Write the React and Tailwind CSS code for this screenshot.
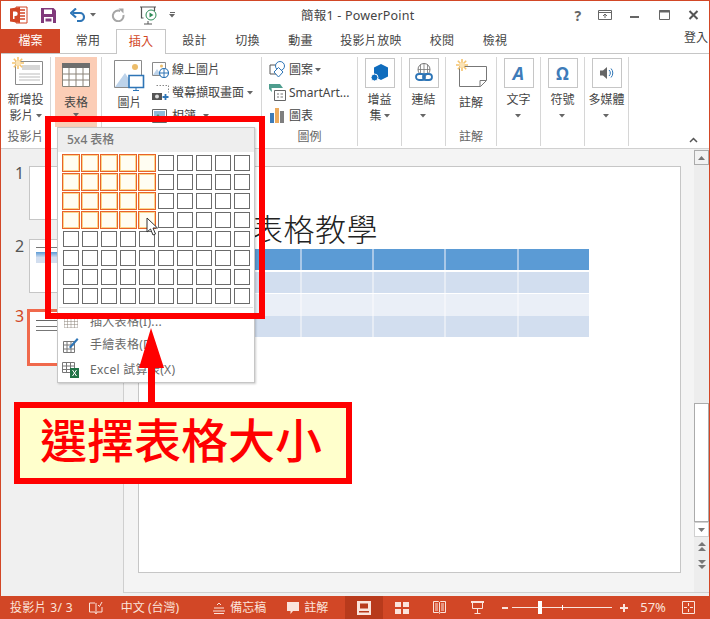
import React from 'react';

const TABS = [
  ['常用', 'ml-[17px] w-[22px]'],
  ['插入', 'ml-[17px] w-[50px]'],
  ['設計', 'ml-[17px] w-[23px]'],
  ['切換', 'ml-[30px] w-[23px]'],
  ['動畫', 'ml-[30px] w-[23px]'],
  ['投影片放映', 'ml-[29px] w-[60px]'],
  ['校閱', 'ml-[29px] w-[24px]'],
  ['檢視', 'ml-[29px] w-[24px]'],
];

const TABLE_ROWS = [
  { h: 'mt-0 [&>div]:h-[21px]', bg: 'bg-[#A9C8E8]', cell: 'bg-[#5B9BD5]' },
  { h: 'mt-[2px] [&>div]:h-[21px]', bg: 'bg-[#E6ECF5]', cell: 'bg-[#D2DEEF]' },
  { h: 'mt-px [&>div]:h-[22px]', bg: 'bg-[#F3F5FA]', cell: 'bg-[#EAEFF7]' },
  { h: 'mt-0 [&>div]:h-[21px]', bg: 'bg-[#E6ECF5]', cell: 'bg-[#D2DEEF]' },
];

const Caret = ({ className = '' }) => (
  <svg width="6" height="4" viewBox="0 0 6 4" className={className}>
    <path d="M0 0h6L3 3.5z" fill="#666" />
  </svg>
);

const Sun = ({ x = 0, y = 0 }) => (
  <g transform={`translate(${x} ${y})`} stroke="#F5C46E" strokeWidth="1.6">
    <path d="M6 0v12M0 6h12M1.8 1.8l8.4 8.4M10.2 1.8l-8.4 8.4" />
    <circle cx="6" cy="6" r="2.6" fill="#FBE3B5" stroke="none" />
  </g>
);

const PptLogo = () => (
  <svg width="18" height="18" viewBox="0 0 18 18">
    <path d="M6 1h11v16H6z" fill="#fff" stroke="#D24726" />
    <path d="M10 4h5M10 7h5M10 10h5M10 13h5" stroke="#D24726" strokeWidth="1.5" />
    <path d="M0 2.5 10 1v16L0 15.5z" fill="#D24726" />
    <path d="M3 13V5.5h2.4a2.2 2.2 0 0 1 0 4.6H4.5V13z" fill="#fff" />
  </svg>
);

const SaveIcon = () => (
  <svg width="15" height="15" viewBox="0 0 15 15">
    <path d="M0 0h12.5L15 2.5V15H0z" fill="#80397B" />
    <path d="M3 1.5h8v4.5H3z" fill="#fff" />
    <path d="M3 9h9v6H3z" fill="#fff" />
    <path d="M4.5 10.5h6v3h-6z" fill="#80397B" />
  </svg>
);

const UndoIcon = () => (
  <svg width="16" height="14" viewBox="0 0 16 14" fill="none">
    <path d="M3 5h7a4 4 0 0 1 0 8H7" stroke="#2E75B6" strokeWidth="2.2" />
    <path d="M6 0.5 1 5l5 4.5" stroke="#2E75B6" strokeWidth="2.2" />
  </svg>
);

const RedoIcon = () => (
  <svg width="14" height="14" viewBox="0 0 14 14" fill="none">
    <path d="M9.2 3A5.3 5.3 0 1 0 12.4 7" stroke="#A6A6A6" strokeWidth="2" />
    <path d="M7.5 0.5h5v5" fill="#A6A6A6" />
  </svg>
);

const ShowIcon = () => (
  <svg width="18" height="19" viewBox="0 0 18 19" fill="none">
    <path d="M0 1h16M1.5 1v11h2M14.5 1v4" stroke="#555" strokeWidth="1.2" />
    <circle cx="11" cy="9" r="5" fill="#fff" stroke="#2E8B57" />
    <path d="M9.5 6.5v5l4-2.5z" fill="#2E8B57" />
    <path d="M8 15v3M4 18h8" stroke="#555" />
  </svg>
);

const SlideIcon = () => (
  <svg width="31" height="30" viewBox="0 0 31 30" fill="none">
    <path d="M3.5 4.5h27v23h-27z" stroke="#8a8a8a" fill="#fff" />
    <path d="M10 8h18v5H10z" fill="#d6d6d6" />
    <path d="M7 17h21M7 20h21M7 23h21" stroke="#bbb" />
    <Sun x="0" y="0" />
  </svg>
);

const TableIcon = ({ w = 28, h = 24 }) => (
  <svg width={w} height={h} viewBox="0 0 28 24" fill="none">
    <path d="M0 0h28v24H0z" fill="#fff" />
    <path d="M0 0h28v5H0z" fill="#6e6e6e" />
    <path d="M.5 5v18.500h27V5M0 11h28M0 17h28M7 5v19M14 5v19M21 5v19" stroke="#8b8378" />
  </svg>
);

const PictureIcon = () => (
  <svg width="31" height="31" viewBox="0 0 31 31" fill="none">
    <path d="M.5.5h27v27H.5z" stroke="#8a8a8a" fill="#fff" />
    <circle cx="21" cy="7" r="3" fill="#EDBD6A" />
    <path d="M1 27 11 13l9 14z" fill="#BDD3EA" />
    <path d="M15 15.500h14.500v12H15z" fill="#fff" stroke="#2E75B6" strokeWidth="1.6" />
    <path d="M22 28v2M19 30.500h6" stroke="#2E75B6" />
  </svg>
);

const OnlinePicIcon = () => (
  <svg width="17" height="16" viewBox="0 0 17 16" fill="none">
    <path d="M.5.5h13v13H.5z" stroke="#8a8a8a" fill="#fff" />
    <circle cx="9.500" cy="4" r="1.500" fill="#EDBD6A" />
    <path d="M1 13l4-6 4 6z" fill="#BDD3EA" />
    <circle cx="12" cy="11" r="4.500" fill="#fff" stroke="#2E75B6" strokeWidth="1.200" />
    <path d="M7.500 11h9M12 6.500v9" stroke="#2E75B6" />
  </svg>
);

const ScreenshotIcon = () => (
  <svg width="17" height="17" viewBox="0 0 17 17" fill="none">
    <path d="M4.500 1.500h12v7" stroke="#888" strokeDasharray="1.500 1.500" />
    <path d="M0 9h10v7H0z" fill="#555" />
    <circle cx="5" cy="12.500" r="2" fill="#ddd" />
    <path d="M13.500 10v6M10.500 13h6" stroke="#2E75B6" strokeWidth="1.800" />
  </svg>
);

const AlbumIcon = () => (
  <svg width="17" height="14" viewBox="0 0 17 14" fill="none">
    <path d="M.5.5h14v13H.5z" stroke="#666" fill="#fff" />
    <path d="M2 2h11v8H2z" fill="#8FBBD9" />
    <path d="M2 10l4-5 4 5z" fill="#4E8F6E" />
  </svg>
);

const ShapesIcon = () => (
  <svg width="17" height="17" viewBox="0 0 17 17" fill="none">
    <path d="M1 4h8v9H1z" stroke="#555" />
    <circle cx="11" cy="5" r="4.500" stroke="#2E75B6" fill="#fff" />
    <path d="M9.500 6.500 14 11l-4.500 5L5 11z" stroke="#2E75B6" fill="#fff" />
  </svg>
);

const SmartArtIcon = () => (
  <svg width="17" height="17" viewBox="0 0 17 17" fill="none">
    <path d="M0 0h11l3 4H2.500L3 8 0 5z" fill="#4E9D8E" />
    <path d="M5.500 6.500h11v10h-11z" stroke="#666" fill="#fff" />
    <path d="M8 10h2M8 13h2M11.500 10H14M11.500 13H14" stroke="#777" />
  </svg>
);

const ChartIcon = () => (
  <svg width="15" height="15" viewBox="0 0 15 15">
    <path d="M0 5h4v10H0z" fill="#3E7CB9" />
    <path d="M5 0h4v15H5z" fill="#EDAA5C" />
    <path d="M10 3h4v12h-4z" fill="#7F7F7F" />
  </svg>
);

const StoreIcon = () => (
  <svg width="20" height="20" viewBox="0 0 20 20">
    <path d="M11 1l7 3.500v9L11 17l-7-3.500v-9z" fill="#0F6CBD" />
    <circle cx="4.500" cy="14.500" r="3.500" fill="#0F6CBD" stroke="#fff" />
  </svg>
);

const LinkIcon = () => (
  <svg width="18" height="20" viewBox="0 0 18 20" fill="none">
    <circle cx="9" cy="6.500" r="6" stroke="#777" />
    <path d="M3 6.500h12M9 .5v12M5.500 1.500v10M12.500 1.500v10" stroke="#777" strokeWidth=".8" />
    <rect x="1" y="11" width="9" height="6" rx="3" stroke="#2E75B6" strokeWidth="1.800" fill="#fff" />
    <rect x="8" y="11" width="9" height="6" rx="3" stroke="#2E75B6" strokeWidth="1.800" />
  </svg>
);

const NoteIcon = () => (
  <svg width="31" height="28" viewBox="0 0 31 28" fill="none">
    <path d="M3.500 7.500h27v14l-6 6h-21z" stroke="#777" fill="#fff" />
    <path d="M30 21.500h-6v6" stroke="#777" />
    <Sun x="0" y="0" />
  </svg>
);

const SpeakerIcon = () => (
  <svg width="14" height="14" viewBox="0 0 14 14" fill="none">
    <path d="M0 4.500h3L7 1v12L3 9.500H0z" fill="#666" />
    <path d="M9 4a4 4 0 0 1 0 6M11 2.500a6.500 6.500 0 0 1 0 9" stroke="#2E75B6" />
  </svg>
);

const Group = ({ width, label, children }) => (
  <div className={`${width} relative flex h-[89px] shrink-0 flex-col border-r border-[#d6d6d6]`}>
    <div className="flex-1 min-h-0">{children}</div>
    {label && <div className="text-center text-[12px] leading-[18px] text-[#666]">{label}</div>}
  </div>
);

const BoxedButton = ({ lines, children }) => (
  <div className="flex flex-col items-center">
    <div className="flex h-[30px] w-[30px] items-center justify-center border border-[#c6c6c6]">{children}</div>
    <div className="mt-[4px] text-center text-[12px] leading-[16px] text-[#444]">
      {lines.map((l) => <div key={l}>{l}</div>)}
      <Caret className="mx-auto mt-[6px]" />
    </div>
  </div>
);

const SmallRow = ({ icon, text, caret }) => (
  <div className="flex h-[23px] items-center whitespace-nowrap text-[12px] text-[#444]">
    <span className="flex w-[18px] justify-center">{icon}</span>
    <span className="ml-[3px]">{text}</span>
    {caret}
  </div>
);

const MenuRow = ({ icon, text, className = '' }) => (
  <div className={`flex h-[23px] items-center ${className}`}>
    <span className="ml-[4px] flex w-[17px] justify-center">{icon}</span>
    <span className="ml-[11px] text-[12px] tracking-[0.3px] text-[#6a6a6a]">{text}</span>
  </div>
);

const StatusText = ({ className = '', children }) => (
  <span className={`whitespace-nowrap text-[12px] text-[#fbe4dc] ${className}`}>{children}</span>
);

const TableGrid = () => (
  <div className="ml-[3px] mt-[1px] grid grid-cols-[repeat(10,19px)] auto-rows-[19px]">
    {Array.from({ length: 80 }).map((_, i) => {
      const sel = i % 10 < 5 && i < 40;
      return (
        <div key={i} className="flex items-center justify-center">
          {sel
            ? <div className="h-[18px] w-[18px] border border-[#E8632A] bg-[#FFFDF2] shadow-[inset_0_0_0_1px_#FBD58C]" />
            : <div className="h-4 w-4 border border-[#6b6b6b] bg-white" />}
        </div>
      );
    })}
  </div>
);

const Thumb = ({ num, active, children, className = '' }) => (
  <div className={`flex ${className}`}>
    <span className={`w-[14px] text-[16px] leading-[14px] ${active ? 'text-[#D24726]' : 'text-[#555]'}`}>{num}</span>
    <div className={active
      ? 'ml-[-2px] h-[57px] w-[86px] border-[3px] border-[#F0694C] bg-white pl-[6px] pt-[8px]'
      : 'h-[54px] w-[84px] border border-[#c6c6c6] bg-white pl-[6px] pt-[7px]'}>
      {children}
    </div>
  </div>
);

export default function App() {
  return (
    <div className="relative flex h-[619px] w-[710px] flex-col overflow-hidden border-x border-t border-[#D24726] bg-white [font-family:'Noto_Sans','Noto_Sans_CJK_TC',sans-serif]">
      {/* title bar */}
      <div className="relative flex h-[28px] shrink-0 items-center">
        <span className="ml-[9px]"><PptLogo /></span>
        <span className="ml-[13px]"><SaveIcon /></span>
        <span className="ml-[14px]"><UndoIcon /></span>
        <Caret className="ml-[4px]" />
        <span className="ml-[15px]"><RedoIcon /></span>
        <span className="ml-[15px]"><ShowIcon /></span>
        <span className="ml-[11px] flex flex-col items-center gap-[1px]">
          <span className="h-px w-[5px] bg-[#666]" />
          <Caret />
        </span>
        <span className="ml-[126px] mt-[2px] whitespace-nowrap text-[12.5px] tracking-[0.2px] text-[#444]">簡報1 - PowerPoint</span>
        <span className="ml-[160px] text-[14px] font-bold text-[#666]">?</span>
        <svg className="ml-[17px]" width="14" height="10" viewBox="0 0 14 10" fill="none">
          <path d="M.5.5h13v9H.5zM0 2.500h14" stroke="#666" />
          <path d="M7 8V4M5 6l2-2 2 2" stroke="#666" />
        </svg>
        <span className="ml-[18px] mt-[4px] h-[2px] w-[9px] bg-[#666]" />
        <svg className="ml-[20px]" width="11" height="10" viewBox="0 0 11 10" fill="none">
          <path d="M.5.5h10v9H.5z" stroke="#666" />
          <path d="M0 1.500h11" stroke="#666" strokeWidth="2" />
        </svg>
        <svg className="ml-[18px]" width="11" height="10" viewBox="0 0 10 10" fill="none">
          <path d="M1 1l8 8M9 1l-8 8" stroke="#555" strokeWidth="2" />
        </svg>
      </div>

      {/* tabs */}
      <div className="relative flex h-[25px] shrink-0 border-b border-[#c6c6c6]">
        <div className="flex h-[24px] w-[59px] items-center justify-center bg-[#D24726] text-[12px] text-white">檔案</div>
        {TABS.map(([t, cls]) => (
          <div
            key={t}
            className={t === '插入'
              ? `${cls} z-10 flex h-[25px] items-center justify-center border-x border-t border-[#c6c6c6] bg-white text-[12px] tracking-[0.3px] text-[#D24726]`
              : `${cls} flex h-[24px] items-center justify-center whitespace-nowrap text-[12px] tracking-[0.3px] text-[#444]`}
          >
            {t}
          </div>
        ))}
        <div className="ml-auto mr-[1px] mt-[1px] text-[12px] leading-[16px] text-[#444]">登入</div>
      </div>

      {/* ribbon */}
      <div className="relative flex h-[95px] shrink-0 border-b border-[#d0d0d0] pt-[3px]">
        <Group width="w-[50px]" label="投影片">
          <div className="flex flex-col items-center">
            <span className="ml-[4px]"><SlideIcon /></span>
            <div className="mt-[5px] text-center text-[12px] leading-[16px] text-[#444]">
              <div className="whitespace-nowrap">新增投</div>
              <div className="flex h-[16px] items-center justify-center gap-[2px]">影片<Caret /></div>
            </div>
          </div>
        </Group>
        <Group width="w-[51px]">
          <div className="mx-[4px] flex h-[70px] flex-col items-center bg-[#FBCDB6] pt-[6px]">
            <TableIcon />
            <div className="mt-[8px] text-[12px] leading-[16px] text-[#444]">表格</div>
            <Caret className="mt-[2px]" />
          </div>
        </Group>
        <Group width="w-[160px]">
          <div className="flex pl-[10px] pt-[3px]">
            <div className="flex w-[35px] flex-col items-center">
              <PictureIcon />
              <div className="mt-[4px] text-[12px] leading-[16px] text-[#444]">圖片</div>
            </div>
            <div className="ml-[4px] mt-[-2px]">
              <SmallRow icon={<OnlinePicIcon />} text="線上圖片" />
              <SmallRow icon={<ScreenshotIcon />} text="螢幕擷取畫面" caret={<Caret className="ml-[3px]" />} />
              <SmallRow icon={<AlbumIcon />} text="相簿" caret={<Caret className="ml-[7px]" />} />
            </div>
          </div>
        </Group>
        <Group width="w-[96px]" label="圖例">
          <div className="pl-[6px] pt-[1px]">
            <SmallRow icon={<ShapesIcon />} text="圖案" caret={<Caret className="ml-[2px]" />} />
            <SmallRow icon={<SmartArtIcon />} text="SmartArt..." />
            <SmallRow icon={<ChartIcon />} text="圖表" />
          </div>
        </Group>
        <Group width="w-[44px]">
          <div className="pt-[1px]">
            <div className="flex flex-col items-center">
              <div className="flex h-[30px] w-[30px] items-center justify-center border border-[#c6c6c6]"><StoreIcon /></div>
              <div className="mt-[4px] text-center text-[12px] leading-[16px] text-[#444]">
                <div>增益</div>
                <div className="flex h-[16px] items-center justify-center gap-[2px]">集<Caret /></div>
              </div>
            </div>
          </div>
        </Group>
        <Group width="w-[44px]">
          <div className="pt-[1px]"><BoxedButton lines={['連結']}><LinkIcon /></BoxedButton></div>
        </Group>
        <Group width="w-[51px]" label="註解">
          <div className="flex flex-col items-center pt-[2px]">
            <NoteIcon />
            <div className="mt-[8px] text-[12px] leading-[16px] text-[#444]">註解</div>
          </div>
        </Group>
        <Group width="w-[44px]">
          <div className="pt-[1px]">
            <BoxedButton lines={['文字']}>
              <span className="text-[18px] font-bold italic leading-none text-[#3E7CB9]">A</span>
            </BoxedButton>
          </div>
        </Group>
        <Group width="w-[44px]">
          <div className="pt-[1px]">
            <BoxedButton lines={['符號']}>
              <span className="text-[17px] font-bold leading-none text-[#3E7CB9]">Ω</span>
            </BoxedButton>
          </div>
        </Group>
        <Group width="w-[44px]">
          <div className="pt-[1px]">
            <BoxedButton lines={['多媒體']}><SpeakerIcon /></BoxedButton>
          </div>
        </Group>
        <svg className="absolute bottom-[5px] right-[11px]" width="9" height="6" viewBox="0 0 9 6" fill="none">
          <path d="M1 5l3.500-3.500L8 5" stroke="#555" strokeWidth="1.500" />
        </svg>
      </div>

      {/* main area */}
      <div className="flex min-h-0 flex-1 border-b-[3px] border-[#f0f0f0] bg-[#f0f0f0]">
        <div className="w-[123px] shrink-0 border-r border-[#cfcfcf] pl-[14px] pt-[17px]">
          <Thumb num="1" />
          <Thumb num="2" className="mt-[19px]">
            <div className="h-px w-[30px] bg-[#777]" />
            <div className="mt-[4px] h-[11px] w-[60px] bg-gradient-to-b from-[#5B9BD5] via-[#D2DEEF] to-[#D2DEEF]" />
          </Thumb>
          <Thumb num="3" active className="mt-[16px]">
            <div className="h-px w-[30px] bg-[#666]" />
            <div className="mt-[5px] h-px w-[40px] bg-[#777]" />
            <div className="mt-[3px] h-px w-[40px] bg-[#777]" />
          </Thumb>
        </div>
        <div className="min-w-0 flex-1 border-b border-[#d0d0d0] bg-[#f4f4f4] pl-[14px] pr-[13px] pt-[17px]">
          <div className="h-[407px] border border-[#c6c6c6] bg-white pt-[42px]">
            <div className="pl-[113px] text-[31px] font-light leading-[40px] tracking-[0.5px] text-[#222]">表格教學</div>
            {TABLE_ROWS.map((r) => (
              <div key={r.cell + r.h} className={`ml-[18px] grid w-[432px] grid-cols-6 gap-x-[2px] ${r.bg} ${r.h}`}>
                {Array.from({ length: 6 }).map((_, i) => <div key={i} className={r.cell} />)}
              </div>
            ))}
          </div>
        </div>
        <div className="flex w-[15px] shrink-0 flex-col items-center border-b border-[#d0d0d0] bg-[#ededed] pt-[1px]">
          <div className="flex h-[15px] w-[15px] items-center justify-center border border-[#ababab] bg-[#f2f2f2]">
            <svg width="7" height="4" viewBox="0 0 7 4"><path d="M0 4h7L3.500 0z" fill="#777" /></svg>
          </div>
          <div className="h-[238px] shrink-0" />
          <div className="h-[119px] w-[15px] shrink-0 border border-[#ababab] bg-white" />
          <div className="flex h-[15px] w-[15px] shrink-0 items-center justify-center border border-[#d0d0d0] bg-white">
            <svg width="7" height="4" viewBox="0 0 7 4"><path d="M0 0h7L3.500 4z" fill="#777" /></svg>
          </div>
          <svg className="mt-[5px]" width="8" height="9" viewBox="0 0 8 9">
            <path d="M0 4h8L4 0zM0 9h8L4 5z" fill="#777" />
          </svg>
          <svg className="mt-[9px]" width="8" height="9" viewBox="0 0 8 9">
            <path d="M0 0h8L4 4zM0 5h8L4 9z" fill="#777" />
          </svg>
        </div>
      </div>

      {/* status bar */}
      <div className="flex h-[23px] shrink-0 items-center bg-[#D24726]">
        <StatusText className="ml-[9px] tracking-[0.3px]">投影片 3/ 3</StatusText>
        <svg className="ml-[16px]" width="14" height="14" viewBox="0 0 14 14" fill="none">
          <path d="M6 2H.5v9H6l1 2 1-2h5V6M7 2v9M9 4l1.500 1.500L13 1" stroke="#fbe4dc" />
        </svg>
        <StatusText className="ml-[18px]">中文 (台灣)</StatusText>
        <svg className="ml-[34px]" width="12" height="12" viewBox="0 0 12 12" fill="none">
          <path d="M4 3l2-2 2 2M1 6h10M0 9h12M1 11.500h10" stroke="#fbe4dc" />
        </svg>
        <StatusText className="ml-[5px]">備忘稿</StatusText>
        <svg className="ml-[21px]" width="12" height="12" viewBox="0 0 12 12">
          <path d="M0 0h12v9H6l-2.500 3V9H0z" fill="#fbe4dc" />
        </svg>
        <StatusText className="ml-[5px]">註解</StatusText>
        <div className="ml-[17px] flex h-[23px] w-[38px] items-center justify-center bg-[#B83A1C]">
          <svg width="14" height="14" viewBox="0 0 14 14">
            <path d="M0 0h14v14H0z" fill="#fbe4dc" />
            <path d="M3 2.500h8v5H3z" fill="#B83A1C" />
            <path d="M2 10h10v1.500H2z" fill="#B83A1C" />
          </svg>
        </div>
        <svg className="ml-[12px]" width="14" height="12" viewBox="0 0 14 12">
          <path d="M0 0h6v5H0zM8 0h6v5H8zM0 7h6v5H0zM8 7h6v5H8z" fill="#fbe4dc" />
        </svg>
        <svg className="ml-[24px]" width="13" height="13" viewBox="0 0 13 13" fill="none">
          <path d="M.5.5h5l1 1 1-1h5v11h-5l-1 1-1-1h-5zM6.500 1.500v10M2 3h3M2 5h3M2 7h3M2 9h3M8 3h3M8 5h3M8 7h3M8 9h3" stroke="#fbe4dc" />
        </svg>
        <svg className="ml-[25px]" width="13" height="13" viewBox="0 0 13 13" fill="none">
          <path d="M0 1h13" stroke="#fbe4dc" strokeWidth="2" />
          <path d="M1.500 1.500v6h10v-6M6.500 7.500v5M3.500 12.500h6" stroke="#fbe4dc" />
        </svg>
        <span className="ml-[18px] h-[2px] w-[6px] bg-[#fbe4dc]" />
        <div className="relative ml-[4px] h-px w-[100px] bg-[#fbe4dc]">
          <span className="absolute left-[26px] top-[-6px] h-[13px] w-1 bg-white" />
          <span className="absolute left-[50px] top-[-2px] h-[5px] w-px bg-white" />
        </div>
        <svg className="ml-[8px]" width="8" height="8" viewBox="0 0 8 8">
          <path d="M3 0h2v3h3v2H5v3H3V5H0V3h3z" fill="#fbe4dc" />
        </svg>
        <StatusText className="ml-[12px] text-[13px]">57%</StatusText>
        <svg className="ml-[16px]" width="13" height="13" viewBox="0 0 13 13" fill="none">
          <path d="M.5.5h12v12H.5z" stroke="#fbe4dc" />
          <path d="M6.500 2v3M6.500 8v3M2 6.500h3M8 6.500h3" stroke="#fbe4dc" />
        </svg>
      </div>

      {/* table dropdown */}
      <div className="absolute left-[56px] top-[126px] h-[256px] w-[198px] border border-[#c6c6c6] bg-white shadow-[1px_1px_2px_rgba(0,0,0,0.2)]">
        <div className="h-6 bg-[#eeeeee] pl-[9px] text-[12px] font-medium leading-[24px] text-[#777]">5x4 表格</div>
        <TableGrid />
        <div className="mx-px mt-[2px] h-px bg-[#e2e2e2]" />
        <div className="mt-[2px]">
          <MenuRow icon={<TableIcon w={14} h={12} />} text="插入表格(I)..." />
          <MenuRow
            icon={(
              <svg width="16" height="16" viewBox="0 0 16 16" fill="none">
                <path d="M.5 4.500h11v11H.5zM.5 8h11M.5 12h11M4 4.500v11M8 4.500v11" stroke="#777" />
                <path d="M6 10l8-9 1.500 1.500-8 9z" fill="#2E75B6" />
              </svg>
            )}
            text="手繪表格(D)"
          />
          <MenuRow
            className="mt-[2px]"
            icon={(
              <svg width="17" height="16" viewBox="0 0 17 16" fill="none">
                <path d="M.5.5h12v10H.5zM.5 4h12M.5 7.500h12M4.500 1v10M8.500 1v10" stroke="#777" />
                <path d="M8 6h9v10H8z" fill="#217346" />
                <path d="M10.500 8l4 6M14.500 8l-4 6" stroke="#fff" />
              </svg>
            )}
            text="Excel 試算表(X)"
          />
        </div>
      </div>

      {/* cursor */}
      <svg className="absolute left-[145px] top-[216px]" width="13" height="20" viewBox="0 0 13 20">
        <path d="M1 1v14l3.500-3 2.500 6 2.500-1-2.500-6h4.500z" fill="#fff" stroke="#333" />
      </svg>

      {/* annotations */}
      <div className="absolute left-[44px] top-[115px] h-[203px] w-[220px] border-[6px] border-[#FF0000]" />
      <svg className="absolute left-[137px] top-[327px]" width="27" height="76" viewBox="0 0 27 76">
        <path d="M13 0 26 40H17V76H10V40H1z" fill="#FF0000" />
      </svg>
      <div className="absolute left-[13px] top-[401px] flex h-[82px] w-[338px] items-center justify-center border-[6px] border-[#FF0000] bg-[#FFFFCC] pb-[6px] pr-[4px] text-[47px] font-medium leading-none text-[#FF0000]">
        選擇表格大小
      </div>
    </div>
  );
}
